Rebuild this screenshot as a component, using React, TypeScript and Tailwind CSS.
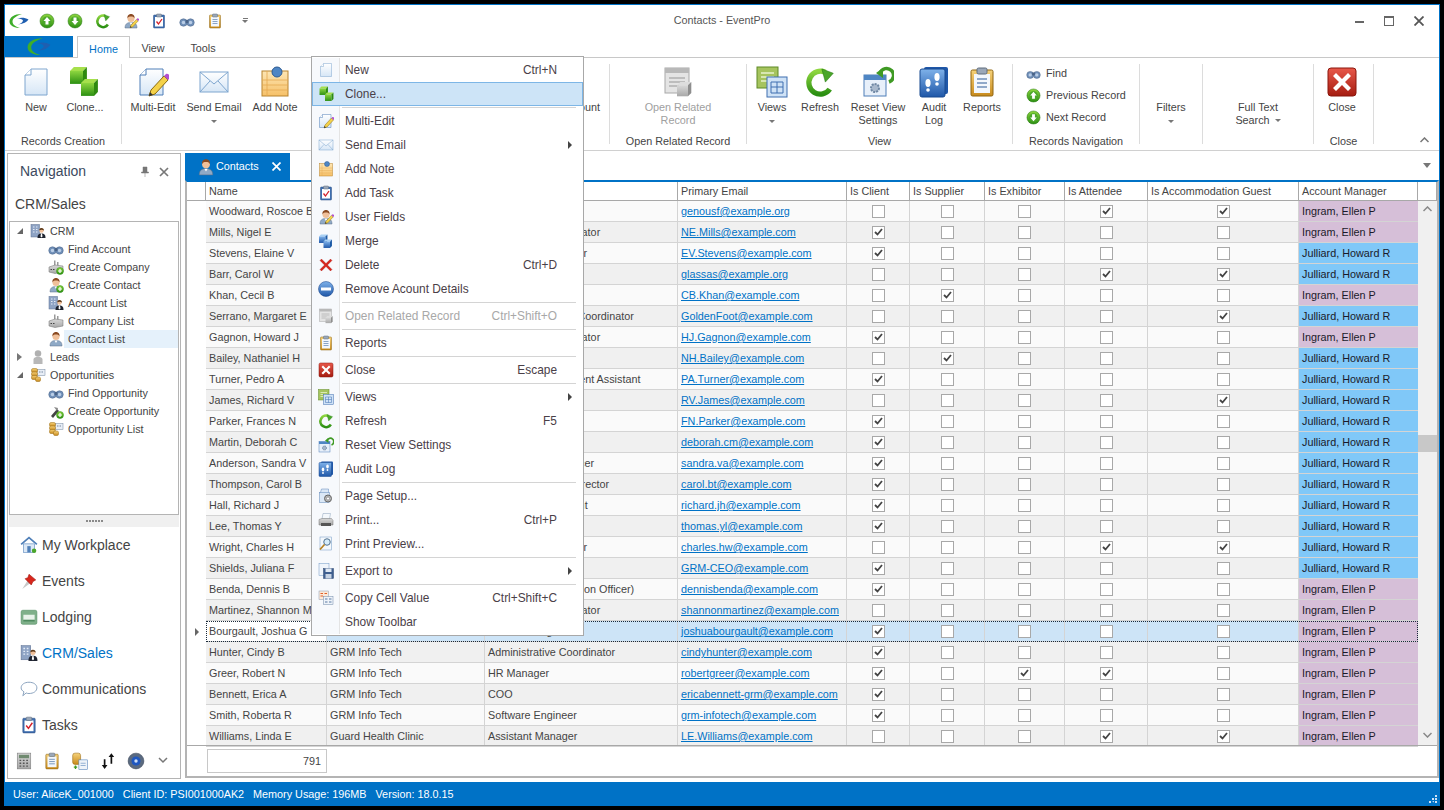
import type { ReactNode } from "react";

// shared gradients for the toolbar drawings
function IconDefs() {
  return (
    <svg width="0" height="0" className="absolute">
      <defs>
        <linearGradient id="paper" x1="0" y1="0" x2="0" y2="1"><stop offset="0" stopColor="#ffffff" /><stop offset="1" stopColor="#d6e6f6" /></linearGradient>
        <linearGradient id="green" x1="0" y1="0" x2="0" y2="1"><stop offset="0" stopColor="#8ed63f" /><stop offset="1" stopColor="#2b8f12" /></linearGradient>
        <linearGradient id="blue" x1="0" y1="0" x2="0" y2="1"><stop offset="0" stopColor="#7fb2ea" /><stop offset="1" stopColor="#1f57a8" /></linearGradient>
        <linearGradient id="note" x1="0" y1="0" x2="0" y2="1"><stop offset="0" stopColor="#fde6b4" /><stop offset="1" stopColor="#f6c068" /></linearGradient>
        <linearGradient id="red" x1="0" y1="0" x2="0" y2="1"><stop offset="0" stopColor="#e8584a" /><stop offset="1" stopColor="#a51c10" /></linearGradient>
        <linearGradient id="gray" x1="0" y1="0" x2="0" y2="1"><stop offset="0" stopColor="#d8d8d8" /><stop offset="1" stopColor="#a8a8a8" /></linearGradient>
        <linearGradient id="gold" x1="0" y1="0" x2="0" y2="1"><stop offset="0" stopColor="#f6d27a" /><stop offset="1" stopColor="#c88a1c" /></linearGradient>
      </defs>
    </svg>
  );
}

function Cube({ x, y, s, c = "green" }: { x: number; y: number; s: number; c?: "green" | "blue" | "gray" }) {
  const tone = {
    green: ["#a6e04c", "url(#green)", "#2f8a10"],
    blue: ["#a8d0f4", "url(#blue)", "#1d5aa6"],
    gray: ["#dddddd", "url(#gray)", "#8e8e8e"],
  }[c];
  const d = s * 0.3;
  return (
    <g>
      <polygon points={`${x + d},${y} ${x + s + d},${y} ${x + s},${y + d} ${x},${y + d}`} fill={tone[0]} />
      <rect x={x} y={y + d} width={s} height={s} fill={tone[1]} />
      <polygon points={`${x + s},${y + d} ${x + s + d},${y} ${x + s + d},${y + s} ${x + s},${y + s + d}`} fill={tone[2]} />
    </g>
  );
}

const Person = ({ fill = "#8fa9c6" }: { fill?: string }) => (
  <g>
    <path d="M4 30c0-8 4-11 12-11s12 3 12 11z" fill={fill} stroke="#5a6f88" strokeWidth="1" />
    <path d="M13 19l3 5 3-5z" fill="#fff" />
    <circle cx="16" cy="11" r="7" fill="#f0c09a" />
    <path d="M9 11c-1-7 4-9 7-9s8 2 7 9c-1-3-3-4-7-4s-6 1-7 4z" fill="#8a4a22" />
  </g>
);

const Plus = () => (
  <g>
    <circle cx="24" cy="24" r="7" fill="url(#green)" stroke="#2b8f12" />
    <path d="M24 20v8M20 24h8" stroke="#fff" strokeWidth="2.4" />
  </g>
);

const Binoculars = () => (
  <g>
    <circle cx="9" cy="19" r="7.5" fill="#6f8fb8" stroke="#4a6488" />
    <circle cx="23" cy="19" r="7.5" fill="#6f8fb8" stroke="#4a6488" />
    <circle cx="9" cy="19" r="3.5" fill="#b9cde6" />
    <circle cx="23" cy="19" r="3.5" fill="#b9cde6" />
    <rect x="13" y="14" width="6" height="6" fill="#4a6488" />
  </g>
);

const Building = () => (
  <g>
    <rect x="2" y="3" width="17" height="25" fill="#8ea3c4" stroke="#5d7092" />
    <path d="M6 8h3M12 8h3M6 13h3M12 13h3M6 18h3M12 18h3" stroke="#e4ecf7" strokeWidth="2.4" />
    <circle cx="23" cy="15" r="4.5" fill="#f0c09a" />
    <path d="M23 10c-4 0-5 3-4 5 2-2 6-2 9 0 0-3-2-5-5-5z" fill="#5d3a1a" />
    <path d="M15 30c0-7 3-9 8-9s8 2 8 9z" fill="#1f2430" />
    <path d="M22 21h2l1 6-2 2-2-2z" fill="#fff" />
  </g>
);

const Factory = () => (
  <g>
    <rect x="12" y="3" width="3" height="12" fill="#9a9a9a" />
    <rect x="18" y="6" width="3" height="9" fill="#9a9a9a" />
    <path d="M2 16l12-4 16 2v12l-16 3-12-3z" fill="url(#gray)" stroke="#6f6f6f" />
    <path d="M5 21h3M10 21h3" stroke="#444" strokeWidth="2" />
  </g>
);

const Coins = () => (
  <g>
    <rect x="14" y="5" width="16" height="12" fill="#e8eef6" stroke="#7487a0" />
    <path d="M18 10h3M23 10h3" stroke="#7487a0" strokeWidth="2" />
    <rect x="3" y="3" width="12" height="8" rx="3" fill="url(#gold)" stroke="#9a6a10" />
    <rect x="3" y="10" width="12" height="8" rx="3" fill="url(#gold)" stroke="#9a6a10" />
    <rect x="3" y="17" width="12" height="8" rx="3" fill="url(#gold)" stroke="#9a6a10" />
    <rect x="11" y="20" width="10" height="9" rx="3" fill="url(#gold)" stroke="#9a6a10" />
  </g>
);

const Clipboard = ({ check }: { check?: boolean }) => (
  <g>
    <rect x="5" y="4" width="22" height="26" rx="1.5" fill={check ? "#3f6fb0" : "url(#gold)"} stroke={check ? "#2b4f85" : "#8f6410"} />
    <rect x="8" y="8" width="16" height="19" fill={check ? "#fff" : "#f3f7fc"} />
    <rect x="11" y="2" width="10" height="6" rx="1.5" fill="#9aa7b8" stroke="#5f6c7c" />
    {check ? (
      <path d="M11 17l4 5 7-10" fill="none" stroke="#d4202a" strokeWidth="2.6" />
    ) : (
      <path d="M11 13h10M11 17h10M11 21h10" stroke="#6f8eb8" strokeWidth="1.6" />
    )}
  </g>
);

const Pencil = () => (
  <g>
    <path d="M14 24l-2 6 6-2 13-14-4-4z" fill="#f4d24a" stroke="#8a6a10" />
    <path d="M27 10l4 4 2-2c1-2-2-5-4-4z" fill="#b24fd0" />
    <path d="M12 30l1-4 3 3z" fill="#333" />
  </g>
);

const Arrow = ({ up }: { up?: boolean }) => (
  <g>
    <circle cx="16" cy="16" r="14" fill="url(#green)" stroke="#23760f" />
    <circle cx="16" cy="16" r="9" fill="#4aa62a" />
    <path d={up ? "M16 8l7 8h-4v7h-6v-7H9z" : "M16 24l7-8h-4V9h-6v7H9z"} fill="#fff" />
  </g>
);

const Refresh = () => (
  <g transform="translate(2 2) scale(.88)">
    <path d="M27 24A13 13 0 1 1 22 5" fill="none" stroke="url(#green)" strokeWidth="6" />
    <path d="M18 1l13 5-9 10z" fill="#4aa62a" stroke="#23760f" strokeWidth=".6" />
  </g>
);

const icons: Record<string, ReactNode> = {
  page: (
    <g>
      <path d="M11 3h16v26H5V9z" fill="url(#paper)" stroke="#7ea6cf" />
      <path d="M11 3v6H5" fill="#fff" stroke="#7ea6cf" />
    </g>
  ),
  cubes: (
    <g>
      <Cube x={1} y={1} s={13} />
      <Cube x={12} y={13} s={13} />
    </g>
  ),
  edit: (
    <g>
      <path d="M9 3h17v26H3V9z" fill="url(#paper)" stroke="#4f7fb8" />
      <path d="M9 3v6H3" fill="#fff" stroke="#4f7fb8" />
      <Pencil />
    </g>
  ),
  mail: (
    <g>
      <rect x="2" y="6" width="28" height="20" fill="url(#paper)" stroke="#7ea6cf" />
      <path d="M2 6l14 12L30 6M2 26l10-11M30 26L20 15" fill="none" stroke="#7ea6cf" />
    </g>
  ),
  note: (
    <g>
      <rect x="3" y="5" width="26" height="25" fill="url(#note)" stroke="#b8832e" />
      <path d="M3 14h26M3 19h26M3 24h26M8 5v25" stroke="#e4a850" strokeWidth=".8" />
      <circle cx="18" cy="6" r="5" fill="#4f86c4" stroke="#2b5a92" />
    </g>
  ),
  task: <Clipboard check />,
  report: <Clipboard />,
  useredit: (
    <g>
      <Person />
      <g transform="translate(4 4) scale(.85)"><Pencil /></g>
    </g>
  ),
  merge: (
    <g>
      <Cube x={2} y={3} s={13} c="blue" />
      <Cube x={11} y={13} s={13} c="blue" />
    </g>
  ),
  x: <path d="M4 7l3-3 9 9 9-9 3 3-9 9 9 9-3 3-9-9-9 9-3-3 9-9z" fill="#d8261c" stroke="#9a130b" strokeWidth=".6" />,
  remove: (
    <g>
      <circle cx="16" cy="16" r="15" fill="url(#blue)" stroke="#123f86" />
      <rect x="6" y="13" width="20" height="6" fill="#fff" />
    </g>
  ),
  related: (
    <g>
      <rect x="3" y="2" width="24" height="25" fill="#e4e4e4" stroke="#a8a8a8" />
      <rect x="3" y="2" width="24" height="5" fill="#b8b8b8" />
      <path d="M7 12h16M7 16h16M7 20h10" stroke="#b0b0b0" strokeWidth="1.6" />
      <Cube x={15} y={16} s={11} c="gray" />
    </g>
  ),
  close: (
    <g>
      <rect x="2" y="2" width="28" height="28" rx="3" fill="url(#red)" stroke="#8a160c" />
      <path d="M7 10l3-3 6 6 6-6 3 3-6 6 6 6-3 3-6-6-6 6-3-3 6-6z" fill="#fff" />
    </g>
  ),
  views: (
    <g>
      <rect x="1" y="1" width="21" height="21" fill="#a6c45e" stroke="#5f8a26" />
      <path d="M5 7h13M5 11h13M5 15h7" stroke="#e8f2cc" strokeWidth="1.6" />
      <rect x="11" y="11" width="20" height="20" fill="#cfe2f6" stroke="#3f6fb0" />
      <path d="M15 16h12v11H15zM15 21h12M21 16v11" fill="none" stroke="#3f6fb0" />
    </g>
  ),
  refresh: <Refresh />,
  reset: (
    <g>
      <rect x="2" y="9" width="22" height="21" fill="#e8f0fa" stroke="#4f7fb8" />
      <rect x="2" y="9" width="22" height="5" fill="#4f86c4" />
      <circle cx="13" cy="22" r="4" fill="#a8b8cc" stroke="#7088a4" strokeWidth="2" strokeDasharray="2 1" />
      <path d="M18 7a7 7 0 1 1 9 9" fill="none" stroke="#3f9a24" strokeWidth="3.5" />
      <path d="M14 7l7-5v10z" fill="#3f9a24" />
    </g>
  ),
  audit: (
    <g>
      <rect x="6" y="1" width="24" height="27" rx="2" fill="#1f57a8" />
      <rect x="2" y="3" width="25" height="28" rx="2" fill="url(#blue)" stroke="#184a90" />
      <ellipse cx="10" cy="17" rx="2.6" ry="4" fill="#fff" />
      <ellipse cx="19" cy="11" rx="2.6" ry="4" fill="#fff" />
      <circle cx="10" cy="24" r="1.8" fill="#fff" />
      <circle cx="19" cy="18" r="1.8" fill="#fff" />
    </g>
  ),
  bino: <Binoculars />,
  up: <Arrow up />,
  down: <Arrow />,
  setup: (
    <g>
      <path d="M7 2h14v10H4z" fill="#dbe8f6" stroke="#5f86b8" />
      <rect x="3" y="9" width="20" height="20" fill="#dbe8f6" stroke="#5f86b8" />
      <circle cx="20" cy="21" r="7" fill="#b8b8b8" stroke="#666" strokeWidth="2" />
      <circle cx="20" cy="21" r="3" fill="#fff" stroke="#666" />
    </g>
  ),
  print: (
    <g>
      <path d="M10 3h15l-2 11H8z" fill="#f4f8fc" stroke="#8aa0b8" />
      <path d="M2 15l6-2h19l3 4v9H2z" fill="url(#gray)" stroke="#777" />
      <rect x="6" y="22" width="20" height="6" fill="#555" />
    </g>
  ),
  preview: (
    <g>
      <rect x="4" y="2" width="23" height="26" fill="#f4f8fc" stroke="#6f97c4" />
      <circle cx="18" cy="12" r="6.5" fill="#d6ecf8" stroke="#4f6f8f" strokeWidth="2" />
      <path d="M13 17l-9 10" stroke="#b8801c" strokeWidth="3.4" />
    </g>
  ),
  save: (
    <g>
      <rect x="2" y="1" width="20" height="24" fill="#f0f5fb" stroke="#6f97c4" />
      <rect x="11" y="11" width="20" height="20" fill="#3f5f8f" stroke="#2b4670" />
      <rect x="15" y="11" width="12" height="7" fill="#dfe8f3" />
      <rect x="15" y="22" width="12" height="9" fill="#c8d4e4" />
    </g>
  ),
  copy: (
    <g>
      <rect x="2" y="2" width="19" height="17" fill="#fbe9d8" stroke="#8a9ab0" />
      <path d="M5 7h5M13 7h5M5 12h5" stroke="#e0602a" strokeWidth="2.4" />
      <rect x="11" y="13" width="19" height="16" fill="#eef3f9" stroke="#6f87a8" />
      <path d="M14 18h5M22 18h5M14 24h5M22 24h5" stroke="#5a7aa4" strokeWidth="2.4" />
    </g>
  ),
  person: <Person />,
  personplus: (
    <g>
      <Person />
      <Plus />
    </g>
  ),
  lead: (
    <g>
      <circle cx="16" cy="9" r="6.5" fill="#b0b0b0" />
      <path d="M7 30V21c0-4 4-5 9-5s9 1 9 5v9z" fill="#b8b8b8" />
    </g>
  ),
  building: <Building />,
  factory: <Factory />,
  factoryplus: (
    <g>
      <Factory />
      <Plus />
    </g>
  ),
  coins: <Coins />,
  oppplus: (
    <g>
      <path d="M6 26l12-14 4 4-12 14z" fill="#444" />
      <path d="M12 8l8 2-2 6z" fill="#888" />
      <Plus />
    </g>
  ),
  home: (
    <g>
      <path d="M2 15L16 3l14 12" fill="none" stroke="#4f7fb8" strokeWidth="3" />
      <rect x="6" y="14" width="20" height="15" fill="#dbe8f6" stroke="#4f7fb8" />
      <rect x="13" y="18" width="6" height="11" fill="#4f7fb8" />
      <circle cx="25" cy="26" r="4" fill="#4aa62a" />
    </g>
  ),
  pin: (
    <g>
      <path d="M14 14L4 30l14-10z" fill="#c8c8c8" />
      <path d="M16 4l12 10-5 3-3 6-11-11 5-2z" fill="#d8261c" stroke="#9a130b" />
    </g>
  ),
  bed: (
    <g>
      <rect x="2" y="4" width="28" height="25" rx="3" fill="#7fb08a" stroke="#4f8a5f" />
      <rect x="6" y="12" width="20" height="9" fill="#e8f2ea" />
      <rect x="6" y="21" width="20" height="3" fill="#4f8a5f" />
    </g>
  ),
  bubble: <path d="M16 4c8 0 14 4 14 10s-6 10-14 10c-2 0-3 0-5-1l-6 5 2-7c-3-2-5-4-5-7C2 8 8 4 16 4z" fill="#fff" stroke="#7f9ab8" strokeWidth="1.6" />,
  calc: (
    <g>
      <rect x="4" y="2" width="24" height="28" fill="url(#gray)" stroke="#777" />
      <rect x="7" y="5" width="18" height="6" fill="#6f8a6f" />
      <path d="M8 15h3M14 15h3M20 15h3M8 20h3M14 20h3M20 20h3M8 25h3M14 25h3M20 25h3" stroke="#555" strokeWidth="2.4" />
    </g>
  ),
  docplus: (
    <g>
      <rect x="3" y="2" width="14" height="20" rx="4" fill="url(#gold)" stroke="#9a6a10" />
      <rect x="14" y="14" width="15" height="17" fill="#eef3f9" stroke="#4f7fb8" />
      <path d="M17 20h9M17 24h9" stroke="#4f7fb8" />
      <path d="M8 24v6M5 27h6" stroke="#3f9a24" strokeWidth="2.4" />
    </g>
  ),
  sort: <path d="M10 30l-5-7h3.5V13h3v10H15zM22 2l5 7h-3.5v12h-3V9H17z" fill="#111" />,
  disc: (
    <g>
      <circle cx="16" cy="16" r="14" fill="#5a6a80" stroke="#3a4658" />
      <circle cx="16" cy="16" r="8" fill="#1f57c0" />
      <circle cx="16" cy="16" r="3" fill="#cfe0f6" />
    </g>
  ),
};

function Icon({ name, size = 16 }: { name: string; size?: number }) {
  return (
    <svg width={size} height={size} viewBox="0 0 32 32" className="shrink-0">
      {icons[name]}
    </svg>
  );
}

const Caret = ({ className = "" }: { className?: string }) => (
  <span className={`inline-block h-0 w-0 border-x-[3px] border-t-[3px] border-x-transparent border-t-[#777] ${className}`} />
);

function Logo({ size }: { size: number }) {
  return (
    <svg width={size} height={size * 0.8} viewBox="0 0 40 32">
      <path d="M26 2C10 2 1 9 1 17c0 8 9 13 21 13-10-3-15-7-15-13S14 6 26 2z" fill="#3fae2a" />
      <path d="M16 11c9-3 16-2 23 2-3 5-10 9-21 10 6-2 10-5 10-8-2-3-6-4-12-4z" fill="#1f5fb0" />
    </svg>
  );
}

function BigBtn({ icon, label, caret, className = "", muted }: { icon?: string; label: ReactNode; caret?: boolean; className?: string; muted?: boolean }) {
  return (
    <div className={`flex flex-col items-center ${className}`}>
      <div className="flex h-[33px] items-center justify-center">{icon ? <Icon name={icon} size={32} /> : null}</div>
      <div className={`mt-[3px] whitespace-nowrap text-center leading-[13px] ${muted ? "text-[#a0a0a0]" : ""}`}>{label}</div>
      {caret ? <Caret className="mt-[6px]" /> : null}
    </div>
  );
}

function Group({ label, className = "", children }: { label?: string; className?: string; children?: ReactNode }) {
  return (
    <div className={`flex h-[80px] shrink-0 flex-col border-r border-[#dcdcdc] ${className}`}>
      <div className="flex h-[71px] shrink-0 pt-px">{children}</div>
      {label ? <div className="whitespace-nowrap text-center leading-[13px]">{label}</div> : null}
    </div>
  );
}

function Ribbon() {
  return (
    <div className="flex h-[93px] shrink-0 items-start border-b border-[#d0d0d0] pt-[6px] text-[#444]">
      <Group label="Records Creation" className="w-[117px]">
        <BigBtn icon="page" label="New" className="w-[62px]" />
        <BigBtn icon="cubes" label="Clone..." className="w-[36px]" />
      </Group>
      <Group label="" className="w-[488px]">
        <BigBtn icon="edit" label="Multi-Edit" className="w-[62px]" />
        <BigBtn icon="mail" label="Send Email" caret className="w-[60px]" />
        <BigBtn icon="note" label="Add Note" className="w-[62px]" />
        <BigBtn label="Remove Acount" className="ml-auto mr-[9px] w-[76px]" />
      </Group>
      <Group label="Open Related Record" className="w-[137px]">
        <BigBtn icon="related" muted label={<>Open Related<br />Record</>} className="w-full" />
      </Group>
      <Group label="View" className="w-[266px]">
        <BigBtn icon="views" label="Views" caret className="w-[50px]" />
        <BigBtn icon="refresh" label="Refresh" className="w-[46px]" />
        <BigBtn icon="reset" label={<>Reset View<br />Settings</>} className="w-[70px]" />
        <BigBtn icon="audit" label={<>Audit<br />Log</>} className="w-[42px]" />
        <BigBtn icon="report" label="Reports" className="w-[54px]" />
      </Group>
      <Group label="Records Navigation" className="w-[127px]">
        <div className="flex flex-col gap-[6px] pl-[13px]">
          {[["bino", "Find"], ["up", "Previous Record"], ["down", "Next Record"]].map(([i, t]) => (
            <div key={t} className="flex h-[16px] items-center gap-[5px] whitespace-nowrap">
              <Icon name={i} size={15} />
              {t}
            </div>
          ))}
        </div>
      </Group>
      <Group className="w-[63px]">
        <BigBtn label="Filters" caret className="w-full" />
      </Group>
      <Group className="w-[111px]">
        <BigBtn label={<>Full Text<br />Search <Caret className="mb-[2px] ml-[2px]" /></>} className="w-full" />
      </Group>
      <Group label="Close" className="w-[60px]">
        <BigBtn icon="close" label="Close" className="w-[56px]" />
      </Group>
      <div className="ml-auto mr-[10px] mt-[72px] flex h-[8px] items-center">
        <svg width="9" height="6" viewBox="0 0 9 6"><path d="M.5 5l4-4 4 4" fill="none" stroke="#777" strokeWidth="1.5" /></svg>
      </div>
    </div>
  );
}

function TreeRow({ icon, label, level, open, selected }: { icon: string; label: string; level: 1 | 2; open?: boolean; selected?: boolean }) {
  return (
    <div className={`flex h-[18px] items-center ${level === 1 ? "pl-[7px]" : "pl-[38px]"}`}>
      {level === 1 ? (
        open ? (
          <span className="mr-[7px] h-0 w-0 border-b-[6px] border-l-[6px] border-b-[#666] border-l-transparent" />
        ) : (
          <span className="mr-[8px] h-0 w-0 border-y-[4px] border-l-[5px] border-y-transparent border-l-[#777]" />
        )
      ) : null}
      <Icon name={icon} />
      <div className={`flex h-[18px] flex-1 items-center pl-[4px] ${selected ? "bg-[#e5f1fb]" : ""}`}>{label}</div>
    </div>
  );
}

function NavPanel() {
  const items = [["home", "My Workplace"], ["pin", "Events"], ["bed", "Lodging"], ["building", "CRM/Sales"], ["bubble", "Communications"], ["task", "Tasks"]];
  return (
    <div className="ml-[2px] mt-[2px] flex h-[626px] w-[174px] shrink-0 flex-col border border-[#b4b4b4] text-[#444]">
      <div className="flex h-[35px] shrink-0 items-center justify-between pl-[12px] pr-[11px] text-[14px] text-[#3c4a60]">
        <span>Navigation</span>
        <div className="flex items-center gap-[9px]">
          <svg width="10" height="11" viewBox="0 0 10 11"><path d="M3 1h4v5h1.500v1h-7V6H3zM5 7v4" fill="#777" stroke="#777" strokeWidth=".5" /></svg>
          <svg width="10" height="10" viewBox="0 0 10 10"><path d="M1 1l8 8M9 1L1 9" stroke="#777" strokeWidth="1.7" /></svg>
        </div>
      </div>
      <div className="flex h-[32px] shrink-0 items-center pb-[3px] pl-[7px] text-[14px] leading-none">CRM/Sales</div>
      <div className="mx-px h-[294px] shrink-0 border border-[#b4b4b4]">
        <TreeRow level={1} open icon="building" label="CRM" />
        <TreeRow level={2} icon="bino" label="Find Account" />
        <TreeRow level={2} icon="factoryplus" label="Create Company" />
        <TreeRow level={2} icon="personplus" label="Create Contact" />
        <TreeRow level={2} icon="building" label="Account List" />
        <TreeRow level={2} icon="factory" label="Company List" />
        <TreeRow level={2} icon="person" label="Contact List" selected />
        <TreeRow level={1} icon="lead" label="Leads" />
        <TreeRow level={1} open icon="coins" label="Opportunities" />
        <TreeRow level={2} icon="bino" label="Find Opportunity" />
        <TreeRow level={2} icon="oppplus" label="Create Opportunity" />
        <TreeRow level={2} icon="coins" label="Opportunity List" />
      </div>
      <div className="mx-px flex h-[12px] shrink-0 items-center justify-center bg-[#f0f0f0]">
        <div className="flex gap-px">
          {[0, 1, 2, 3, 4, 5].map((d) => (
            <span key={d} className="h-[2px] w-[2px] bg-[#8a8a8a]" />
          ))}
        </div>
      </div>
      {items.map(([i, t]) => (
        <div key={t} className={`flex h-[36px] shrink-0 items-center gap-[4px] pl-[12px] text-[14px] ${t === "CRM/Sales" ? "text-[#0072c6]" : ""}`}>
          <Icon name={i} size={18} />
          {t}
        </div>
      ))}
      <div className="flex h-[35px] shrink-0 items-center pl-[2px]">
        {["calc", "report", "docplus", "sort", "disc"].map((i) => (
          <div key={i} className="flex w-[28px] justify-center">
            <Icon name={i} size={18} />
          </div>
        ))}
        <svg className="ml-[8px]" width="10" height="7" viewBox="0 0 10 7"><path d="M1 1l4 4 4-4" fill="none" stroke="#777" strokeWidth="1.5" /></svg>
      </div>
    </div>
  );
}

type Row = [string, string, string, string, string, "I" | "J"];

const rows: Row[] = [
  ["Woodward, Roscoe B", "GRM Info Tech", "Event Planner", "genousf@example.org", "00011", "I"],
  ["Mills, Nigel E", "GRM Info Tech", "Database Administrator", "NE.Mills@example.com", "10000", "I"],
  ["Stevens, Elaine V", "GRM Info Tech", "Accounting Manager", "EV.Stevens@example.com", "10000", "J"],
  ["Barr, Carol W", "GRM Info Tech", "Event Planner", "glassas@example.org", "00011", "J"],
  ["Khan, Cecil B", "GRM Info Tech", "Supplier", "CB.Khan@example.com", "01000", "I"],
  ["Serrano, Margaret E", "GRM Info Tech", "Conference Event Coordinator", "GoldenFoot@example.com", "00001", "J"],
  ["Gagnon, Howard J", "GRM Info Tech", "Database Administrator", "HJ.Gagnon@example.com", "10000", "I"],
  ["Bailey, Nathaniel H", "GRM Info Tech", "Supplier", "NH.Bailey@example.com", "01000", "J"],
  ["Turner, Pedro A", "GRM Info Tech", "Executive Department Assistant", "PA.Turner@example.com", "10000", "J"],
  ["James, Richard V", "GRM Info Tech", "Consultant", "RV.James@example.com", "00001", "J"],
  ["Parker, Frances N", "GRM Info Tech", "Analyst", "FN.Parker@example.com", "10000", "J"],
  ["Martin, Deborah C", "GRM Info Tech", "Consultant", "deborah.cm@example.com", "10000", "J"],
  ["Anderson, Sandra V", "GRM Info Tech", "Chief Financial Officer", "sandra.va@example.com", "10000", "J"],
  ["Thompson, Carol B", "GRM Info Tech", "Communications Director", "carol.bt@example.com", "10000", "J"],
  ["Hall, Richard J", "GRM Info Tech", "Accounting Assistant", "richard.jh@example.com", "10000", "J"],
  ["Lee, Thomas Y", "GRM Info Tech", "Analyst", "thomas.yl@example.com", "10000", "J"],
  ["Wright, Charles H", "GRM Info Tech", "Accounting Manager", "charles.hw@example.com", "00011", "J"],
  ["Shields, Juliana F", "GRM Info Tech", "CEO", "GRM-CEO@example.com", "10000", "J"],
  ["Benda, Dennis B", "GRM Info Tech", "CIO (Chief Information Officer)", "dennisbenda@example.com", "10000", "I"],
  ["Martinez, Shannon M", "GRM Info Tech", "Database Administrator", "shannonmartinez@example.com", "00000", "I"],
  ["Bourgault, Joshua G", "GRM Info Tech", "VP Marketing", "joshuabourgault@example.com", "10000", "I"],
  ["Hunter, Cindy B", "GRM Info Tech", "Administrative Coordinator", "cindyhunter@example.com", "10000", "I"],
  ["Greer, Robert N", "GRM Info Tech", "HR Manager", "robertgreer@example.com", "10110", "I"],
  ["Bennett, Erica A", "GRM Info Tech", "COO", "ericabennett-grm@example.com", "10000", "I"],
  ["Smith, Roberta R", "GRM Info Tech", "Software Engineer", "grm-infotech@example.com", "10000", "I"],
  ["Williams, Linda E", "Guard Health Clinic", "Assistant Manager", "LE.Williams@example.com", "00011", "I"],
];

const gridCols = "grid grid-cols-[121px_158px_193px_169px_63px_75px_80px_83px_151px_119px]";

function Check({ on }: { on: boolean }) {
  return (
    <div className="flex h-full items-center justify-center border-r border-[#d4d4d4]">
      <div className="flex h-[13px] w-[13px] items-center justify-center border border-[#a8a8a8] bg-white">
        {on ? (
          <svg width="9" height="8" viewBox="0 0 9 8"><path d="M1 4l2.500 2.500L8 1" fill="none" stroke="#444" strokeWidth="1.800" /></svg>
        ) : null}
      </div>
    </div>
  );
}

function GridRow({ row, index }: { row: Row; index: number }) {
  const selected = index === 20;
  const bg = selected ? "bg-[#cde4f7]" : index % 2 === 0 ? "bg-[#fafafa]" : "bg-[#f0f0f0]";
  const cell = "flex h-full items-center overflow-hidden whitespace-nowrap border-r border-[#d4d4d4] pl-[3px]";
  return (
    <div className="flex h-[21px]">
      <div className="flex w-[19px] shrink-0 items-center justify-center">
        {selected ? <span className="h-0 w-0 border-y-[4px] border-l-[4px] border-y-transparent border-l-[#666]" /> : null}
      </div>
      <div className={`${gridCols} h-[21px] border-b border-[#d4d4d4] ${bg} ${selected ? "outline-1 -outline-offset-1 outline-dotted outline-[#1a2a3a]" : ""}`}>
        <div className={`${cell} ${selected ? "bg-white" : ""}`}>{row[0]}</div>
        <div className={cell}>{row[1]}</div>
        <div className={cell}>{row[2]}</div>
        <div className={`${cell} text-[#0072c6] underline`}>{row[3]}</div>
        {[...row[4]].map((f, i) => (
          <Check key={i} on={f === "1"} />
        ))}
        <div className={`flex h-full items-center pl-[3px] text-[#1a1a2a] ${row[5] === "I" ? "bg-[#d6bfd8]" : "bg-[#80c8f8]"}`}>
          {row[5] === "I" ? "Ingram, Ellen P" : "Julliard, Howard R"}
        </div>
      </div>
    </div>
  );
}

function ContactsGrid() {
  const heads = ["Name", "", "", "Primary Email", "Is Client", "Is Supplier", "Is Exhibitor", "Is Attendee", "Is Accommodation Guest", "Account Manager"];
  return (
    <div className="flex h-[598px] flex-col border-x-2 border-b-2 border-t-2 border-x-[#b4b4b4] border-b-[#b4b4b4] border-t-[#0072c6]">
      <div className="flex min-h-0 flex-1">
        <div className="flex w-[1231px] shrink-0 flex-col">
          <div className="flex h-[19px] shrink-0 border-b border-[#a8a8a8]">
            <div className="w-[19px] shrink-0 border-r border-[#a8a8a8]" />
            <div className={gridCols}>
              {heads.map((h, i) => (
                <div key={i} className="flex items-center whitespace-nowrap border-r border-[#a8a8a8] pl-[3px]">{h}</div>
              ))}
            </div>
          </div>
          {rows.map((r, i) => (
            <GridRow key={r[0]} row={r} index={i} />
          ))}
        </div>
        <div className="flex flex-1 flex-col">
          <div className="h-[19px] shrink-0 border-b border-r border-[#a8a8a8]" />
          <div className="flex flex-1 flex-col items-center bg-[#f0f0f0]">
            <svg className="mt-[5px]" width="9" height="6" viewBox="0 0 9 6"><path d="M.5 5l4-4 4 4" fill="none" stroke="#888" strokeWidth="1.5" /></svg>
            <div className="mt-[223px] h-[17px] w-full bg-[#c8c8c8]" />
            <svg className="mb-[7px] mt-auto" width="9" height="6" viewBox="0 0 9 6"><path d="M.5 1l4 4 4-4" fill="none" stroke="#888" strokeWidth="1.5" /></svg>
          </div>
        </div>
      </div>
      <div className="h-[31px] shrink-0 border-t border-[#a8a8a8] pl-[20px] pt-[3px]">
        <div className="flex h-[24px] w-[120px] items-center justify-end border border-[#c8c8c8] pr-[5px]">791</div>
      </div>
    </div>
  );
}

type MenuEntry = { icon?: string; label: string; key?: string; sub?: boolean; on?: boolean; off?: boolean } | "-";

const menu: MenuEntry[] = [
  { icon: "page", label: "New", key: "Ctrl+N" },
  { icon: "cubes", label: "Clone...", on: true },
  "-",
  { icon: "edit", label: "Multi-Edit" },
  { icon: "mail", label: "Send Email", sub: true },
  { icon: "note", label: "Add Note" },
  { icon: "task", label: "Add Task" },
  { icon: "useredit", label: "User Fields" },
  { icon: "merge", label: "Merge" },
  { icon: "x", label: "Delete", key: "Ctrl+D" },
  { icon: "remove", label: "Remove Acount Details" },
  "-",
  { icon: "related", label: "Open Related Record", key: "Ctrl+Shift+O", off: true },
  "-",
  { icon: "report", label: "Reports" },
  "-",
  { icon: "close", label: "Close", key: "Escape" },
  "-",
  { icon: "views", label: "Views", sub: true },
  { icon: "refresh", label: "Refresh", key: "F5" },
  { icon: "reset", label: "Reset View Settings" },
  { icon: "audit", label: "Audit Log" },
  "-",
  { icon: "setup", label: "Page Setup..." },
  { icon: "print", label: "Print...", key: "Ctrl+P" },
  { icon: "preview", label: "Print Preview..." },
  "-",
  { icon: "save", label: "Export to", sub: true },
  "-",
  { icon: "copy", label: "Copy Cell Value", key: "Ctrl+Shift+C" },
  { label: "Show Toolbar" },
];

function ContextMenu() {
  return (
    <div className="absolute left-[306px] top-[51px] z-10 w-[273px] border border-[#a8a8a8] bg-white py-px text-[11.9px] text-[#4a4048]">
      {menu.map((m, i) =>
        m === "-" ? (
          <div key={i} className="flex h-[3px]">
            <div className="w-[28px] shrink-0 border-r border-[#e4e4e4] bg-[#f7f9fc]" />
            <div className="ml-[2px] mr-[7px] mt-px h-px flex-1 bg-[#d4d4d4]" />
          </div>
        ) : (
          <div key={m.label} className={`flex h-[24px] items-center ${m.off ? "text-[#a8a8a8]" : ""} ${m.on ? "border border-[#7db6e6] bg-[#cde4f7]" : ""}`}>
            <div className={`flex h-full shrink-0 items-center justify-center ${m.on ? "w-[27px]" : "w-[28px] border-r border-[#e4e4e4] bg-[#f7f9fc]"}`}>
              {m.icon ? <Icon name={m.icon} size={16} /> : null}
            </div>
            <div className="ml-[5px] flex-1 whitespace-nowrap pt-[2px]">{m.label}</div>
            <div className="whitespace-nowrap pt-[2px]">{m.key}</div>
            <div className="flex w-[26px] shrink-0 justify-end pr-[11px]">
              {m.sub ? <span className="h-0 w-0 border-y-[4px] border-l-[4px] border-y-transparent border-l-[#444]" /> : null}
            </div>
          </div>
        ),
      )}
    </div>
  );
}

export default function App() {
  return (
    <div className="h-[810px] w-[1444px] overflow-hidden bg-black p-[4px] text-[10.8px] text-[#444] [font-family:'Liberation_Sans',Arial,sans-serif]">
      <IconDefs />
      <div className="relative flex h-[802px] w-[1436px] flex-col border-x border-t border-[#0072c6] bg-white">
        {/* title bar */}
        <div className="grid h-[31px] shrink-0 grid-cols-[1fr_auto_1fr] items-center">
          <div className="flex items-center">
            <div className="flex w-[28px] justify-center"><Logo size={20} /></div>
            {["up", "down", "refresh", "useredit", "task", "bino", "report"].map((i) => (
              <div key={i} className="flex w-[28px] justify-center"><Icon name={i} size={16} /></div>
            ))}
            <div className="flex w-[32px] flex-col items-center justify-center gap-px">
              <span className="h-px w-[5px] bg-[#777]" />
              <Caret />
            </div>
          </div>
          <div className="text-[#555]">Contacts - EventPro</div>
          <div className="flex items-center justify-end pr-[5px]">
            <div className="flex w-[30px] justify-center"><span className="mt-[3px] h-[2px] w-[9px] bg-[#666]" /></div>
            <div className="flex w-[30px] justify-center"><span className="h-[10px] w-[10px] border border-t-2 border-[#666]" /></div>
            <div className="flex w-[30px] justify-center">
              <svg width="10" height="10" viewBox="0 0 10 10"><path d="M.5.5l9 9M9.500.5l-9 9" stroke="#555" strokeWidth="1.800" /></svg>
            </div>
          </div>
        </div>
        {/* ribbon tabs */}
        <div className="flex h-[22px] shrink-0 border-b border-[#c8c8c8] text-[#444]">
          <div className="flex w-[68px] items-center justify-center bg-[#0072c6]"><Logo size={24} /></div>
          <div className="ml-[4px] flex h-[22px] w-[53px] items-center justify-center border-x border-t border-[#c8c8c8] bg-white pt-[3px] text-[#0072c6]">Home</div>
          <div className="flex w-[46px] items-center justify-center pt-[3px]">View</div>
          <div className="flex w-[54px] items-center justify-center pt-[3px]">Tools</div>
        </div>
        <Ribbon />
        {/* main area */}
        <div className="flex min-h-0 flex-1">
          <NavPanel />
          <div className="ml-[4px] flex min-w-0 flex-1 flex-col">
            <div className="mt-[2px] flex h-[27px] shrink-0 items-start justify-between">
              <div className="flex h-[27px] w-[105px] items-center bg-[#0072c6] pl-[12px] text-white">
                <Icon name="person" size={18} />
                <span className="ml-px">Contacts</span>
                <svg className="ml-[13px]" width="9" height="9" viewBox="0 0 9 9"><path d="M.5.5l8 8M8.500.5l-8 8" stroke="#fff" strokeWidth="1.700" /></svg>
              </div>
              <div className="mr-[8px] mt-[10px] flex"><span className="h-0 w-0 border-x-[4px] border-t-[5px] border-x-transparent border-t-[#777]" /></div>
            </div>
            <ContactsGrid />
          </div>
        </div>
        {/* status bar */}
        <div className="mt-auto flex h-[24px] shrink-0 items-center justify-between bg-[#0072c6] pl-[8px] text-white">
          <div className="flex gap-[9px]">
            <span>User: AliceK_001000</span>
            <span>Client ID: PSI001000AK2</span>
            <span>Memory Usage: 196MB</span>
            <span>Version: 18.0.15</span>
          </div>
          <svg className="mr-px mt-[10px]" width="10" height="10" viewBox="0 0 10 10" fill="#cfe2f6">
            <path d="M7 1h2v2H7zM4 4h2v2H4zM7 4h2v2H7zM1 7h2v2H1zM4 7h2v2H7zM7 7h2v2H7z" />
          </svg>
        </div>
        <ContextMenu />
      </div>
    </div>
  );
}
